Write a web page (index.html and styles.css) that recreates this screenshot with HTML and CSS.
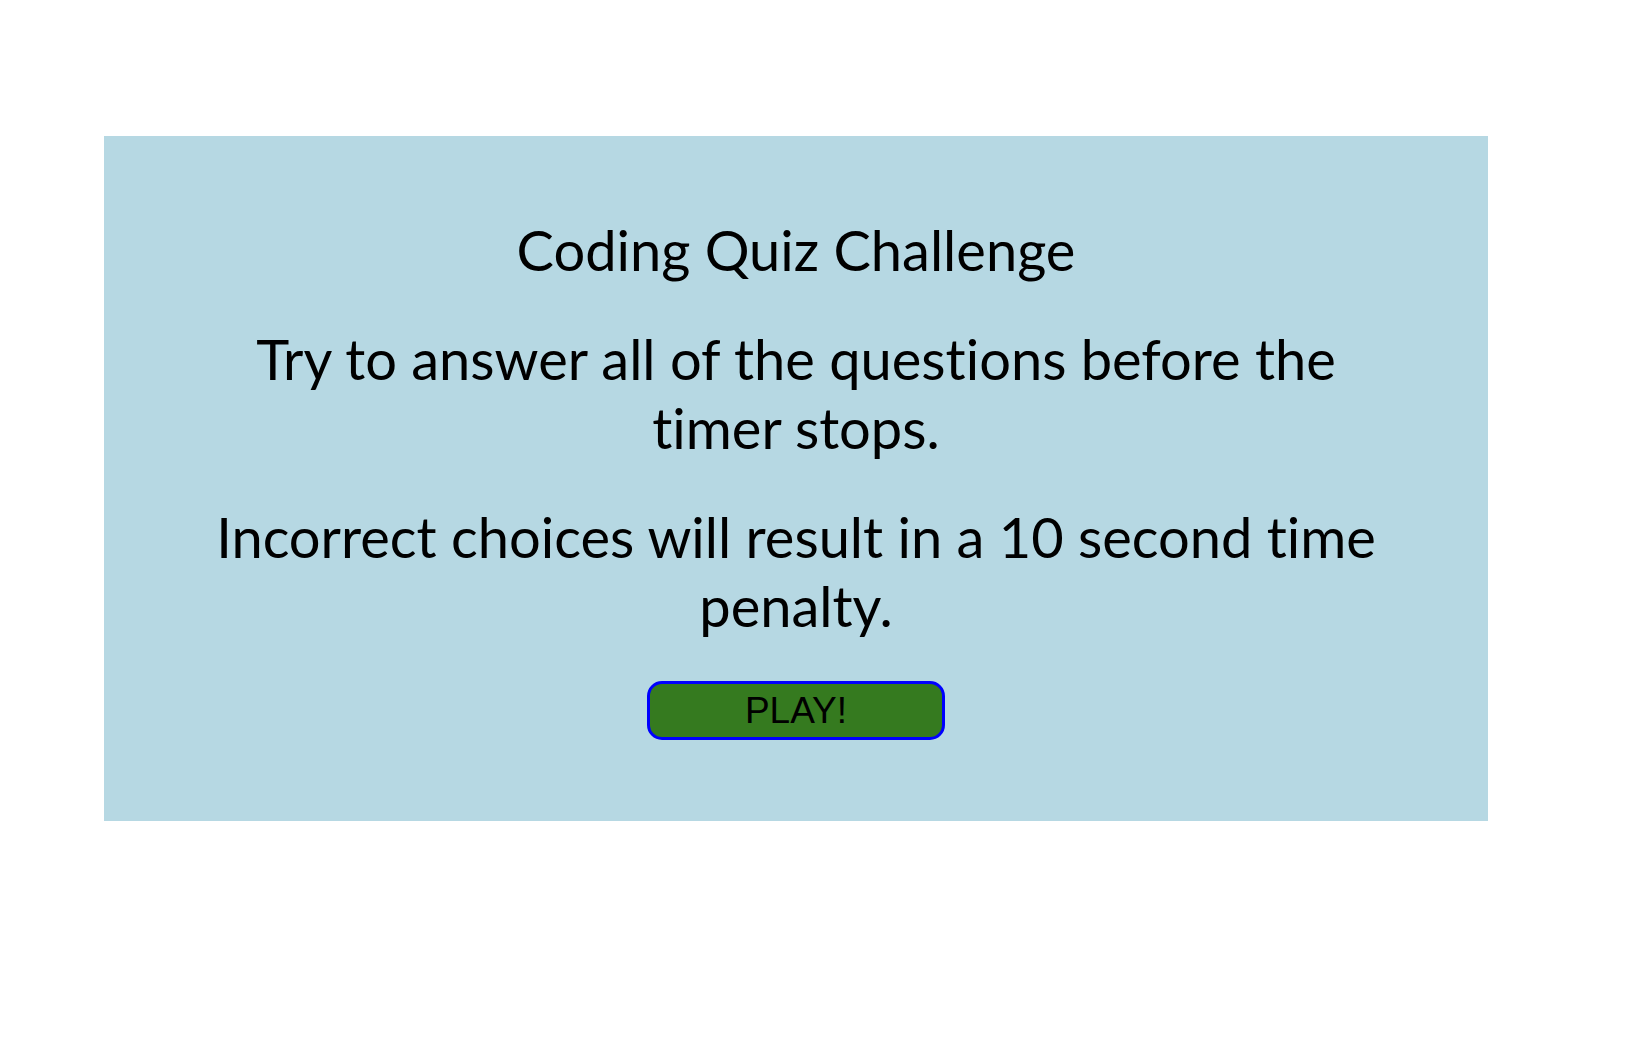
FILE: index.html
```html
<!DOCTYPE html>
<html>
<head>
<meta charset="utf-8">
<title>Coding Quiz Challenge</title>
<link rel="stylesheet" href="styles.css">
</head>
<body>
<main class="quiz-card">
  <h1 class="quiz-title">Coding Quiz Challenge</h1>
  <p class="quiz-text">Try to answer all of the questions before the timer stops.</p>
  <p class="quiz-text">Incorrect choices will result in a 10 second time penalty.</p>
  <button class="play-btn" type="button">PLAY!</button>
</main>
</body>
</html>
```

FILE: styles.css
```css
html, body {
  margin: 0;
  padding: 0;
  background: #ffffff;
}

body {
  font-family: "Lato", "Open Sans", sans-serif;
  color: #000000;
  font-variant-ligatures: none;
}

.quiz-card {
  box-sizing: border-box;
  width: 1384px;
  height: 685px;
  margin: 136px 0 0 104px;
  padding: 80px 100px 0;
  background: #b6d8e3;
  display: flex;
  flex-direction: column;
  align-items: center;
  text-align: center;
}

.quiz-title {
  margin: 0 0 41px;
  font-size: 56px;
  font-weight: 400;
  line-height: 67px;
}

.quiz-text {
  margin: 0 0 40px;
  font-size: 56px;
  font-weight: 400;
  line-height: 69px;
}

.quiz-text:last-of-type {
  margin-bottom: 41px;
}

.play-btn {
  box-sizing: border-box;
  width: 298px;
  height: 59px;
  padding: 0;
  border: 3px solid #0000ff;
  border-radius: 15px;
  background: #357a1f;
  color: #000000;
  font-family: "Liberation Sans", Arial, sans-serif;
  font-size: 37px;
  line-height: 1;
  display: flex;
  align-items: center;
  justify-content: center;
  cursor: pointer;
}
```
